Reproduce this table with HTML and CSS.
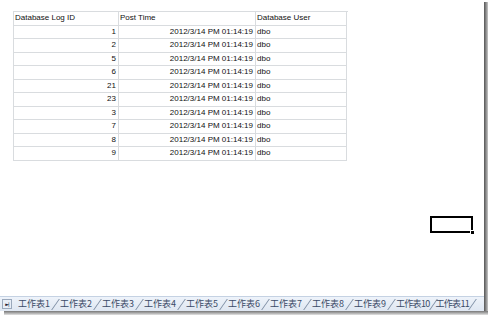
FILE: index.html
```html
<!DOCTYPE html>
<html>
<head>
<meta charset="utf-8">
<link rel="stylesheet" href="styles.css">
</head>
<body>
<div class="frame">
  <div class="screen">
    <div class="sheet">
      <div class="table">
        <div class="cell hd">Database Log ID</div><div class="cell hd">Post Time</div><div class="cell hd">Database User</div>
        <div class="cell num">1</div><div class="cell num">2012/3/14 PM 01:14:19</div><div class="cell">dbo</div>
        <div class="cell num">2</div><div class="cell num">2012/3/14 PM 01:14:19</div><div class="cell">dbo</div>
        <div class="cell num">5</div><div class="cell num">2012/3/14 PM 01:14:19</div><div class="cell">dbo</div>
        <div class="cell num">6</div><div class="cell num">2012/3/14 PM 01:14:19</div><div class="cell">dbo</div>
        <div class="cell num">21</div><div class="cell num">2012/3/14 PM 01:14:19</div><div class="cell">dbo</div>
        <div class="cell num">23</div><div class="cell num">2012/3/14 PM 01:14:19</div><div class="cell">dbo</div>
        <div class="cell num">3</div><div class="cell num">2012/3/14 PM 01:14:19</div><div class="cell">dbo</div>
        <div class="cell num">7</div><div class="cell num">2012/3/14 PM 01:14:19</div><div class="cell">dbo</div>
        <div class="cell num">8</div><div class="cell num">2012/3/14 PM 01:14:19</div><div class="cell">dbo</div>
        <div class="cell num">9</div><div class="cell num">2012/3/14 PM 01:14:19</div><div class="cell">dbo</div>
      </div>
      <div class="selection"><span class="handle"></span></div>
    </div>
    <div class="tabbar">
      <span class="nav">&#9658;|</span>
      <span class="tab">工作表1</span>
      <span class="tab">工作表2</span>
      <span class="tab">工作表3</span>
      <span class="tab">工作表4</span>
      <span class="tab">工作表5</span>
      <span class="tab">工作表6</span>
      <span class="tab">工作表7</span>
      <span class="tab">工作表8</span>
      <span class="tab">工作表9</span>
      <span class="tab tight">工作表10</span>
      <span class="tab tight">工作表11</span>
    </div>
  </div>
  <div class="rshadow"></div>
</div>
<div class="bshadow"></div>
</body>
</html>
```
FILE: styles.css
```css
html, body {
  margin: 0;
  padding: 0;
  background: #fff;
  width: 488px;
  height: 315px;
  overflow: hidden;
}
.frame {
  display: flex;
  height: 311px;
}
.screen {
  width: 484px;
  display: flex;
  flex-direction: column;
}
.sheet {
  flex: 1;
  position: relative;
  padding: 11px 0 0 13px;
}
.table {
  display: grid;
  grid-template-columns: 105px 137px 91px;
  grid-auto-rows: 13.55px;
  width: 334px;
  border-top: 1px solid #d9dcdf;
  border-left: 1px solid #d9dcdf;
  font-family: "Liberation Sans", Arial, sans-serif;
  font-size: 8px;
  color: #111;
}
.cell {
  border-right: 1px solid #d9dcdf;
  border-bottom: 1px solid #d9dcdf;
  padding: 0 2px 0 1px;
  line-height: 12.5px;
  white-space: nowrap;
  overflow: hidden;
}
.num { text-align: right; }
.selection {
  position: absolute;
  left: 430px;
  top: 216px;
  width: 39px;
  height: 13px;
  border: 2px solid #000;
}
.handle {
  position: absolute;
  right: -4px;
  bottom: -4px;
  width: 3px;
  height: 3px;
  background: #000;
  border: 1px solid #fff;
}
.tabbar {
  height: 14px;
  display: flex;
  align-items: center;
  background: linear-gradient(#eef3fa, #dfe7f2);
  border-top: 1px solid #c5d2e3;
  font-family: "Noto Sans CJK SC", sans-serif;
  font-size: 9px;
  color: #3a4a66;
  overflow: hidden;
  white-space: nowrap;
}
.nav {
  width: 8px;
  margin: 0 5px 0 2px;
  font-family: "DejaVu Sans", sans-serif;
  font-size: 5px;
  color: #223;
  background: #e8eef7;
  border: 1px solid #9aa8bb;
  height: 8px;
  line-height: 8px;
  text-align: center;
  letter-spacing: -1px;
}
.tab {
  position: relative;
  padding: 0 7px 0 1px;
  margin-right: 2px;
  line-height: 14px;
}
.tab.tight {
  letter-spacing: -0.7px;
  padding-right: 5px;
  margin-right: 0;
}
.tab::after {
  content: "";
  position: absolute;
  right: 1px;
  top: 2px;
  width: 1px;
  height: 11px;
  background: #7d8da3;
  transform: skewX(-35deg);
}
.rshadow {
  width: 4px;
  margin-top: 2px;
  background: linear-gradient(to right, #555, #8a8a8a, #c8c8c8);
}
.bshadow {
  height: 4px;
  margin-left: 4px;
  background: linear-gradient(#777, #aaa, #e4e4e4);
}
```
